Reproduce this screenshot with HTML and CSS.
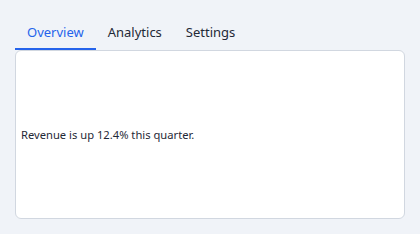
FILE: index.html
```html
<!DOCTYPE html>
<html>
<head>
<meta charset="utf-8">
<link rel="stylesheet" href="styles.css">
</head>
<body>
<div class="tabs">
  <div class="tablist">
    <div class="tab active">Overview</div>
    <div class="tab">Analytics</div>
    <div class="tab">Settings</div>
  </div>
  <div class="panel">
    <p class="text">Revenue is up 12.4% this quarter.</p>
  </div>
</div>
</body>
</html>
```
FILE: styles.css
```css
html, body {
  margin: 0;
  padding: 0;
  background: #f0f3f8;
  font-family: "Noto Sans", sans-serif;
}
.tabs {
  padding: 16px 15px 0 15px;
}
.tablist {
  display: flex;
}
.tab {
  padding: 6px 12px 6px 12px;
  font-size: 13px;
  line-height: 20px;
  color: #1f2937;
  border-bottom: 2px solid transparent;
}
.tab.active {
  color: #2563eb;
  border-bottom-color: #2563eb;
}
.panel {
  height: 167px;
  background: #ffffff;
  border: 1px solid #d1d7e0;
  border-radius: 6px;
  display: flex;
  align-items: center;
  padding: 0 5px;
}
.text {
  margin: 0;
  font-size: 11.2px;
  color: #1f2937;
}
```
